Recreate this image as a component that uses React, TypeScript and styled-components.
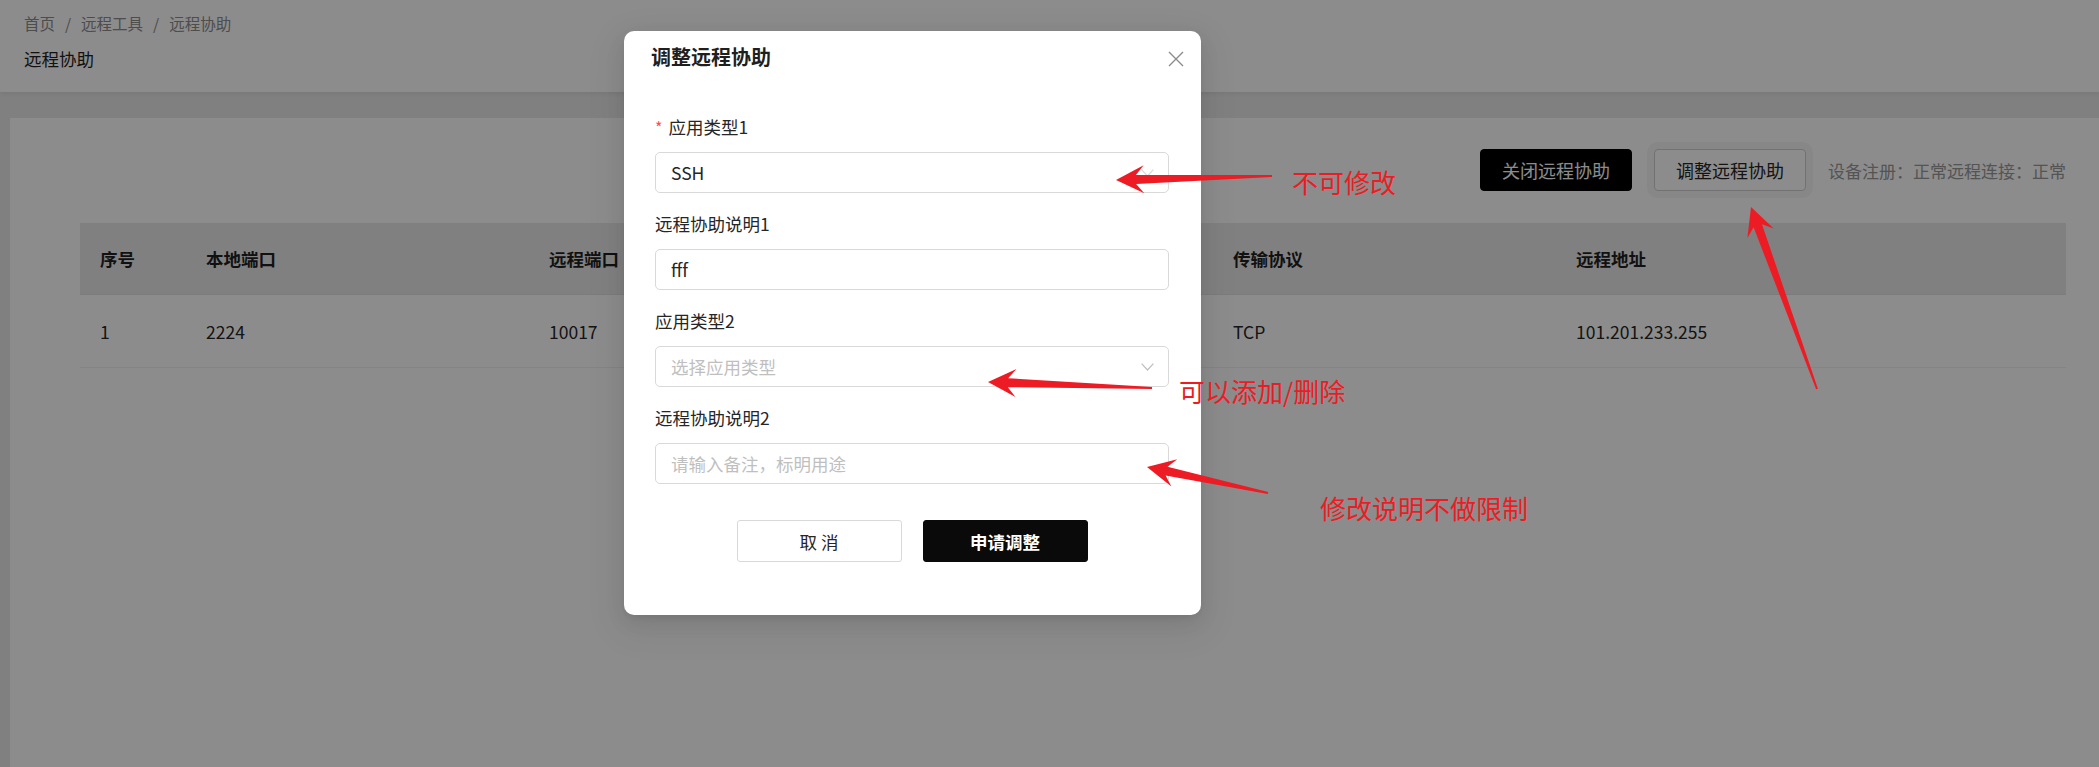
import styled, { createGlobalStyle, css } from 'styled-components';

const GlobalStyle = createGlobalStyle`
  html, body {
    margin: 0;
    padding: 0;
  }
  body {
    font-family: "Noto Sans CJK SC", "Noto Sans", sans-serif;
    color: #262626;
    background: #e9e9e9;
  }
  * {
    box-sizing: border-box;
  }
`;

const Page = styled.div`
  position: relative;
  min-height: 767px;
  display: flex;
  flex-direction: column;
  overflow: hidden;
  background: #e9e9e9;
`;

const Header = styled.header`
  height: 92px;
  padding: 11px 24px 0;
  background: #fff;
  box-shadow: 0 2px 4px rgba(0, 0, 0, 0.06);
`;

const Crumbs = styled.nav`
  display: flex;
  align-items: center;
  font-size: 15.5px;
  line-height: 24px;
  color: #8c8c8c;
`;

const Sep = styled.span`
  margin: 0 10px;
`;

const PageTitle = styled.h1`
  margin: 10px 0 0;
  font-size: 17.5px;
  font-weight: 400;
  line-height: 28px;
  color: #1f1f1f;
`;

const Main = styled.main`
  flex: 1;
  display: flex;
  padding: 26px 0 0 10px;
`;

const Card = styled.section`
  flex: 1;
  background: #fff;
  padding: 31px 33px 40px 70px;
`;

const Toolbar = styled.div`
  display: flex;
  justify-content: flex-end;
  align-items: center;
  gap: 22px;
  height: 42px;
`;

const ActionButton = styled.button<{ $variant: 'dark' | 'light' }>`
  height: 42px;
  padding: 0 21px;
  font-family: inherit;
  font-size: 18px;
  border-radius: 4px;
  cursor: pointer;
  ${p => p.$variant === 'dark'
    ? css`
      background: #000;
      color: #fff;
      border: 1px solid #000;
    `
    : css`
      background: #fff;
      color: #262626;
      border: 1px solid #cfcfcf;
      box-shadow: 0 0 0 7px rgba(0, 0, 0, 0.035);
    `}
`;

const Status = styled.span`
  font-size: 17px;
  color: #999;
  white-space: nowrap;
`;

const Table = styled.div`
  margin-top: 32px;
`;

const Row = styled.div<{ $head?: boolean }>`
  display: grid;
  grid-template-columns: 106px 343px 342px 342px 343px 1fr;
  align-items: center;
  height: ${p => (p.$head ? 72 : 73)}px;
  background: ${p => (p.$head ? '#e9e9e9' : '#fff')};
  border-bottom: 1px solid ${p => (p.$head ? '#e2e2e2' : '#f0f0f0')};
  font-size: 17.5px;
  font-weight: ${p => (p.$head ? 700 : 400)};
  color: ${p => (p.$head ? '#1f1f1f' : '#262626')};
`;

const Cell = styled.div`
  padding: 0 20px;
  white-space: nowrap;
`;

const Mask = styled.div`
  position: absolute;
  inset: 0;
  background: rgba(0, 0, 0, 0.45);
`;

const Dialog = styled.div`
  position: absolute;
  left: 624px;
  top: 31px;
  width: 577px;
  padding: 12px 32px 53px 31px;
  background: #fff;
  border-radius: 10px;
  box-shadow:
    0 7px 20px 0 rgba(0, 0, 0, 0.08),
    0 4px 8px -5px rgba(0, 0, 0, 0.12),
    0 11px 35px 10px rgba(0, 0, 0, 0.05);
`;

const DialogTitle = styled.h2`
  margin: 0 0 0 -4px;
  font-size: 20px;
  line-height: 28px;
  font-weight: 700;
  color: #1f1f1f;
`;

const CloseButton = styled.button`
  position: absolute;
  top: 20px;
  right: 17px;
  width: 16px;
  height: 16px;
  padding: 0;
  border: 0;
  background: none;
  cursor: pointer;
  svg {
    display: block;
  }
`;

const Form = styled.div`
  margin-top: 43px;
  display: flex;
  flex-direction: column;
  gap: 18px;
`;

const Field = styled.div`
  display: flex;
  flex-direction: column;
  gap: 12px;
`;

const Label = styled.label`
  display: flex;
  align-items: center;
  font-size: 17.5px;
  line-height: 26px;
  color: #262626;
`;

const Required = styled.span`
  margin-right: 6px;
  font-size: 16px;
  color: #ff4d4f;
`;

const Control = styled.div<{ $placeholder?: boolean }>`
  height: 41px;
  display: flex;
  align-items: center;
  justify-content: space-between;
  padding: 0 14px 0 15px;
  border: 1px solid #d9d9d9;
  border-radius: 5px;
  font-size: 17.5px;
  color: ${p => (p.$placeholder ? '#bfbfbf' : '#262626')};
`;

const Footer = styled.div`
  margin-top: 36px;
  display: flex;
  justify-content: center;
  gap: 21px;
`;

const FooterButton = styled.button<{ $primary?: boolean }>`
  width: 165px;
  height: 42px;
  font-family: inherit;
  font-size: 17.5px;
  border-radius: 3px;
  cursor: pointer;
  ${p => p.$primary
    ? css`
      background: #0a0a0a;
      border: 1px solid #0a0a0a;
      color: #fff;
      font-weight: 700;
    `
    : css`
      background: #fff;
      border: 1px solid #d9d9d9;
      color: #262626;
    `}
`;

const Marks = styled.svg`
  position: absolute;
  left: 0;
  top: 0;
  pointer-events: none;
`;

const Note = styled.span<{ $x: number; $y: number }>`
  position: absolute;
  left: ${p => p.$x}px;
  top: ${p => p.$y}px;
  font-size: 26px;
  line-height: 32px;
  color: #ed1c24;
  white-space: nowrap;
`;

type Pt = [number, number];

// tapered callout arrow: thin tail widening into a notched head
function arrowPoints(tail: Pt, tip: Pt, head = 28, half = 14, neck = 9, end = 2) {
  const dx = tip[0] - tail[0];
  const dy = tip[1] - tail[1];
  const len = Math.hypot(dx, dy);
  const ux = dx / len;
  const uy = dy / len;
  const nx = -uy;
  const ny = ux;
  const at = (back: number, side: number): Pt => [
    tip[0] - ux * back + nx * side,
    tip[1] - uy * back + ny * side,
  ];
  const pts: Pt[] = [
    tip,
    at(head, half),
    at(head - 8, neck / 2),
    [tail[0] + (nx * end) / 2, tail[1] + (ny * end) / 2],
    [tail[0] - (nx * end) / 2, tail[1] - (ny * end) / 2],
    at(head - 8, -neck / 2),
    at(head, -half),
  ];
  return pts.map(p => `${p[0].toFixed(1)},${p[1].toFixed(1)}`).join(' ');
}

const arrows: { tail: Pt; tip: Pt }[] = [
  { tail: [1272, 176], tip: [1116, 180] },
  { tail: [1152, 388], tip: [988, 382] },
  { tail: [1268, 493], tip: [1147, 467] },
  { tail: [1817, 389], tip: [1751, 207] },
];

const notes = [
  { x: 1292, y: 166, text: '不可修改' },
  { x: 1179, y: 375, text: '可以添加/删除' },
  { x: 1320, y: 492, text: '修改说明不做限制' },
];

const columns = ['序号', '本地端口', '远程端口', '应用类型', '传输协议', '远程地址'];
const rows = [['1', '2224', '10017', 'SSH', 'TCP', '101.201.233.255']];

function Chevron({ color }: { color: string }) {
  return (
    <svg width="13" height="8" viewBox="0 0 13 8">
      <polyline points="0.6,0.6 6.5,7 12.4,0.6" fill="none" stroke={color} strokeWidth="1.2" />
    </svg>
  );
}

export default function App() {
  return (
    <>
      <GlobalStyle />
      <Page>
        <Header>
          <Crumbs>
            <span>首页</span>
            <Sep>/</Sep>
            <span>远程工具</span>
            <Sep>/</Sep>
            <span>远程协助</span>
          </Crumbs>
          <PageTitle>远程协助</PageTitle>
        </Header>

        <Main>
          <Card>
            <Toolbar>
              <ActionButton $variant="dark">关闭远程协助</ActionButton>
              <ActionButton $variant="light">调整远程协助</ActionButton>
              <Status>设备注册：正常远程连接：正常</Status>
            </Toolbar>
            <Table>
              <Row $head>
                {columns.map(c => (
                  <Cell key={c}>{c}</Cell>
                ))}
              </Row>
              {rows.map(r => (
                <Row key={r[0]}>
                  {r.map((v, i) => (
                    <Cell key={i}>{v}</Cell>
                  ))}
                </Row>
              ))}
            </Table>
          </Card>
        </Main>

        <Mask />

        <Dialog>
          <DialogTitle>调整远程协助</DialogTitle>
          <CloseButton aria-label="close">
            <svg width="16" height="16" viewBox="0 0 16 16">
              <path d="M1 1 L15 15 M15 1 L1 15" stroke="#8c8c8c" strokeWidth="1.4" />
            </svg>
          </CloseButton>
          <Form>
            <Field>
              <Label>
                <Required>*</Required>应用类型1
              </Label>
              <Control>
                <span>SSH</span>
                <Chevron color="#d9d9d9" />
              </Control>
            </Field>
            <Field>
              <Label>远程协助说明1</Label>
              <Control>
                <span>fff</span>
              </Control>
            </Field>
            <Field>
              <Label>应用类型2</Label>
              <Control $placeholder>
                <span>选择应用类型</span>
                <Chevron color="#bfbfbf" />
              </Control>
            </Field>
            <Field>
              <Label>远程协助说明2</Label>
              <Control $placeholder>
                <span>请输入备注，标明用途</span>
              </Control>
            </Field>
          </Form>
          <Footer>
            <FooterButton>取 消</FooterButton>
            <FooterButton $primary>申请调整</FooterButton>
          </Footer>
        </Dialog>

        <Marks width="2099" height="767" viewBox="0 0 2099 767">
          {arrows.map((a, i) => (
            <polygon key={i} points={arrowPoints(a.tail, a.tip)} fill="#ed1c24" />
          ))}
        </Marks>
        {notes.map(n => (
          <Note key={n.text} $x={n.x} $y={n.y}>
            {n.text}
          </Note>
        ))}
      </Page>
    </>
  );
}
